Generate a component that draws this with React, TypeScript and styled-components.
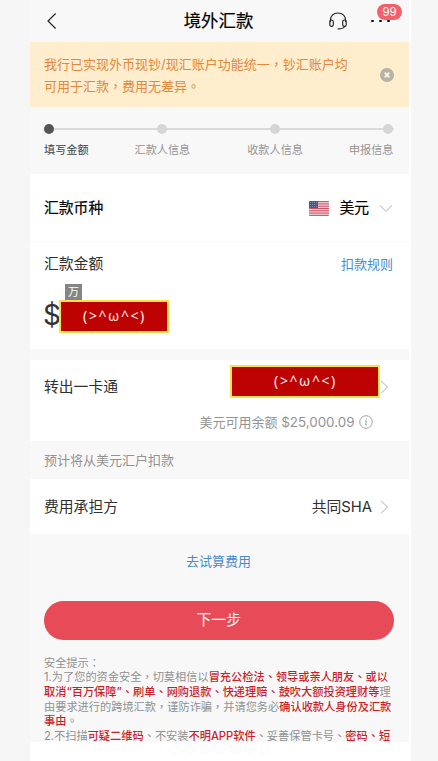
import React from 'react';
import styled, { createGlobalStyle } from 'styled-components';

const Global = createGlobalStyle`
  * { box-sizing: border-box; }
  html, body { margin: 0; padding: 0; background: #f6f6f6; overflow: hidden; }
  body { font-family: Inter, 'Noto Sans CJK SC', sans-serif; }
`;

const Page = styled.div`
  width: 438px;
  height: 761px;
  padding-left: 30px;
  background: #f6f6f6;
  overflow: hidden;
`;

const Screen = styled.main`
  display: flex;
  flex-direction: column;
  width: 381px;
  height: 761px;
  border-right: 2px solid #fff;
  background: #f8f8f8;
`;

const Header = styled.header`
  flex: none;
  display: grid;
  grid-template-columns: 80px 1fr 80px;
  align-items: center;
  height: 42px;
  padding: 0 15px 0 13px;
`;

const Title = styled.h1`
  margin: 0;
  font-size: 17.4px;
  line-height: 26px;
  font-weight: 400;
  color: #000;
  -webkit-text-stroke: 0.2px #000;
  text-align: center;
  white-space: nowrap;
`;

const Actions = styled.div`
  display: flex;
  align-items: center;
  justify-content: flex-end;
  gap: 24px;
  padding-right: 4px;
`;

const More = styled.div`
  position: relative;
  display: flex;
  gap: 5.6px;
  i { width: 2.6px; height: 2.6px; border-radius: 50%; background: #111; }
`;

const Badge = styled.span`
  position: absolute;
  left: 6px;
  top: -16px;
  width: 25px;
  height: 16px;
  border-radius: 8px;
  background: #f4606a;
  color: #fff;
  font-size: 11.5px;
  line-height: 16px;
  text-align: center;
`;

const Notice = styled.section`
  flex: none;
  display: flex;
  align-items: center;
  justify-content: space-between;
  height: 65px;
  padding: 1px 15.5px 0 14px;
  background: #feeecd;
`;

const NoticeText = styled.div`
  color: #e1883d;
  font-size: 13px;
  line-height: 21.5px;
  white-space: nowrap;
`;

const Punct = styled.span`
  font-family: 'Noto Sans CJK TC', sans-serif;
`;

const Steps = styled.section`
  flex: none;
  height: 66.5px;
  padding: 17px 15.5px 0 14px;
`;

const Track = styled.div`
  display: flex;
  align-items: center;
  justify-content: space-between;
  height: 10px;
  background: linear-gradient(#dadada, #dadada) center / 100% 2px no-repeat;
`;

const Dot = styled.i<{ $active?: boolean }>`
  width: 10px;
  height: 10px;
  border-radius: 50%;
  background: ${p => (p.$active ? '#555' : '#d6d6d6')};
`;

const Labels = styled.div`
  display: flex;
  justify-content: space-between;
  margin-top: 8px;
`;

const StepLabel = styled.span<{ $active?: boolean }>`
  font-size: 11.15px;
  line-height: 16px;
  color: ${p => (p.$active ? '#444' : '#959595')};
  white-space: nowrap;
  &:nth-child(3) { margin-left: 11px; }
`;

const Panel = styled.section<{ $height: number; $gap?: number }>`
  flex: none;
  height: ${p => p.$height}px;
  margin-bottom: ${p => p.$gap ?? 0}px;
  padding: 0 16px 0 14px;
  background: #fff;
`;

const Row = styled.div<{ $height: number; $end?: number }>`
  display: flex;
  align-items: center;
  justify-content: space-between;
  height: ${p => p.$height}px;
  padding-right: ${p => p.$end ?? 0}px;
`;

const Group = styled.div<{ $gap: number }>`
  display: flex;
  align-items: center;
  gap: ${p => p.$gap}px;
`;

const Label = styled.span<{ $strong?: boolean }>`
  font-size: 14.8px;
  line-height: 22px;
  color: ${p => (p.$strong ? '#000' : '#303030')};
  -webkit-text-stroke: ${p => (p.$strong ? '0.2px #000' : '0')};
  white-space: nowrap;
`;

const Link = styled.a`
  font-size: 13px;
  line-height: 20px;
  color: #4a8cca;
`;

const Amount = styled.div`
  display: flex;
  align-items: flex-end;
  margin-top: -2.5px;
`;

const Currency = styled.span`
  width: 16px;
  margin-left: -1px;
  font-size: 28px;
  line-height: 35px;
  color: #333;
`;

const Unit = styled.span`
  display: block;
  width: 17px;
  height: 16px;
  margin-left: 6px;
  background: #858585;
  color: #fff;
  font-size: 11px;
  line-height: 16px;
  text-align: center;
`;

const Mask = styled.div<{ $width: number }>`
  display: flex;
  align-items: center;
  justify-content: center;
  width: ${p => p.$width}px;
  height: 33px;
  padding: 0 0 2px 1px;
  border: 2px solid #fbe04a;
  background: #bd0202;
  color: #fff1ec;
  font-family: 'Noto Sans', sans-serif;
  font-size: 14px;
  letter-spacing: 1.6px;
`;

const Transfer = styled.div`
  display: flex;
  align-items: center;
  ${Mask} { margin-top: -12px; }
`;

const Balance = styled.div`
  display: flex;
  align-items: center;
  justify-content: flex-end;
  gap: 4px;
  margin-top: -3px;
  padding-right: 20.5px;
  font-size: 13px;
  line-height: 20px;
  color: #939393;
  b { font-weight: 400; font-size: 13.4px; }
`;

const Hint = styled.div`
  flex: none;
  height: 38px;
  padding-left: 14px;
  font-size: 13px;
  line-height: 38px;
  color: #929292;
`;

const Trial = styled.div`
  flex: none;
  height: 67px;
  padding: 16px 2px 0 0;
  text-align: center;
  line-height: 20px;
`;

const Next = styled.button`
  flex: none;
  width: 349.5px;
  height: 39px;
  margin: 0 0 0 14px;
  padding: 0;
  border: 0;
  border-radius: 20px;
  background: #e64b57;
  color: #fff;
  font: 400 14.8px/39px Inter, 'Noto Sans CJK SC', sans-serif;
`;

const Tips = styled.section`
  flex: none;
  height: 102.5px;
  padding: 15px 0 0 14px;
  font-size: 11.21px;
  line-height: 14.7px;
  color: #919191;
`;

const TipLine = styled.div`
  height: 14.7px;
  white-space: nowrap;
`;

const Strong = styled.strong`
  font-weight: 500;
  color: #cb1f2a;
`;

const Footer = styled.footer`
  flex: 1;
  display: flex;
  justify-content: center;
  gap: 5px;
  padding-top: 2px;
  background: #fff;
  i { width: 10px; height: 10px; border-radius: 50%; border: 1px solid #fafafa; }
`;

const fullWidth: Record<string, string> = { ',': '\uFF0C', ':': '\uFF1A' };

// Punctuation is full-width and set centred in its cell.
const T = ({ children }: { children: string }) => (
  <>
    {children.split(/([,:\uFF0C\uFF1A\u3001\u3002])/).map((s, i) =>
      i % 2 ? <Punct key={i} lang="zh-Hant">{fullWidth[s] ?? s}</Punct> : s
    )}
  </>
);

const Chevron = () => (
  <svg width="9" height="14" viewBox="0 0 9 14" fill="none" stroke="#c8c8c8" strokeWidth="1.1">
    <path d="M1 .8 7.6 7 1 13.2" />
  </svg>
);

const Flag = () => (
  <svg width="20" height="15" viewBox="0 0 20 15">
    <clipPath id="flag"><rect width="20" height="15" rx="1.3" /></clipPath>
    <g clipPath="url(#flag)">
      <rect width="20" height="15" fill="#f3dfe3" />
      {[0, 1, 2, 3, 4, 5, 6].map(n => (
        <rect key={n} y={n * 2.3} width="20" height="1.15" fill="#cf5367" />
      ))}
      <rect width="9" height="7" fill="#46538a" />
      {[1.3, 3.5, 5.7].map(y => [1.2, 3.4, 5.6, 7.8].map(x => (
        <circle key={`${x}-${y}`} cx={x} cy={y} r=".45" fill="#d5d9ea" />
      )))}
    </g>
  </svg>
);

export default function App() {
  return (
    <Page lang="zh-Hans">
      <Global />
      <Screen>
        <Header>
          <svg width="16" height="18" viewBox="0 0 16 18" fill="none" stroke="#222" strokeWidth="1.2">
            <path d="M12.6 1.5 5 9 12.6 16.5" />
          </svg>
          <Title>境外汇款</Title>
          <Actions>
            <svg width="18" height="18" viewBox="0 0 18 18" fill="none" stroke="#222" strokeWidth="1.15">
              <path d="M1.5 10V7.8C1.5 3.8 4.6 1 9 1s7.5 2.8 7.5 6.8V10" />
              <rect x=".8" y="8" width="3.5" height="6.4" rx="1.7" />
              <rect x="13.7" y="8" width="3.5" height="6.4" rx="1.7" />
              <path d="M15.6 14.4c-.6 1.6-2.4 2.4-5.6 2.4H8.7" />
            </svg>
            <More><i /><i /><i /><Badge>99</Badge></More>
          </Actions>
        </Header>

        <Notice>
          <NoticeText>
            <div><T>我行已实现外币现钞/现汇账户功能统一,钞汇账户均</T></div>
            <div><T>可用于汇款,费用无差异。</T></div>
          </NoticeText>
          <svg width="14" height="14" viewBox="0 0 14 14">
            <circle cx="7" cy="7" r="7" fill="#b7b2a7" />
            <path d="m4.7 4.7 4.6 4.6m0-4.6L4.7 9.3" stroke="#fff6e2" strokeWidth="1.8" />
          </svg>
        </Notice>

        <Steps>
          <Track><Dot $active /><Dot /><Dot /><Dot /></Track>
          <Labels>
            <StepLabel $active>填写金额</StepLabel>
            <StepLabel>汇款人信息</StepLabel>
            <StepLabel>收款人信息</StepLabel>
            <StepLabel>申报信息</StepLabel>
          </Labels>
        </Steps>

        <Panel $height={67} $gap={1.5}>
          <Row $height={69}>
            <Label $strong>汇款币种</Label>
            <Group $gap={10}>
              <Flag />
              <Label $strong>美元</Label>
              <svg width="14" height="9" viewBox="0 0 14 9" fill="none" stroke="#c8c8c8" strokeWidth="1.1">
                <path d="m1 1.3 6 6 6-6" />
              </svg>
            </Group>
          </Row>
        </Panel>

        <Panel $height={107} $gap={10.5}>
          <Row $height={44}>
            <Label>汇款金额</Label>
            <Link>扣款规则</Link>
          </Row>
          <Amount>
            <Currency>$</Currency>
            <div>
              <Unit>万</Unit>
              <Mask $width={110}>(&gt;^ω^&lt;)</Mask>
            </div>
          </Amount>
        </Panel>

        <Panel $height={81.5}>
          <Row $height={55} $end={4}>
            <Label>转出一卡通</Label>
            <Transfer>
              <Mask $width={150}>(&gt;^ω^&lt;)</Mask>
              <Chevron />
            </Transfer>
          </Row>
          <Balance>
            <span>美元可用余额 <b>$25,000.09</b></span>
            <svg width="14" height="14" viewBox="0 0 14 14" fill="none" stroke="#999" strokeWidth=".9">
              <circle cx="7" cy="7" r="6.3" />
              <path d="M6 6h1.4L6.6 10h1.2M7.4 3.6v1" />
            </svg>
          </Balance>
        </Panel>

        <Hint>预计将从美元汇户扣款</Hint>

        <Panel $height={54.5}>
          <Row $height={55} $end={4.5}>
            <Label>费用承担方</Label>
            <Group $gap={7.5}>
              <Label>共同SHA</Label>
              <Chevron />
            </Group>
          </Row>
        </Panel>

        <Trial><Link>去试算费用</Link></Trial>
        <Next>下一步</Next>

        <Tips>
          <TipLine><T>安全提示:</T></TipLine>
          <TipLine>
            <T>1.为了您的资金安全,切莫相信以</T>
            <Strong><T>冒充公检法、领导或亲人朋友、或以</T></Strong>
          </TipLine>
          <TipLine>
            <Strong><T>取消“百万保障”、刷单、网购退款、快递理赔、鼓吹大额投资理财等</T></Strong>理
          </TipLine>
          <TipLine>
            <T>由要求进行的跨境汇款,谨防诈骗,并请您务必</T>
            <Strong>确认收款人身份及汇款</Strong>
          </TipLine>
          <TipLine><Strong>事由</Strong><T>。</T></TipLine>
          <TipLine>
            2.不扫描<Strong>可疑二维码</Strong><T>、不安装</T><Strong>不明APP软件</Strong>
            <T>、妥善保管卡号、</T><Strong><T>密码、短</T></Strong>
          </TipLine>
        </Tips>
        <Footer><i /><i /><i /><i /><i /><i /><i /></Footer>
      </Screen>
    </Page>
  );
}
